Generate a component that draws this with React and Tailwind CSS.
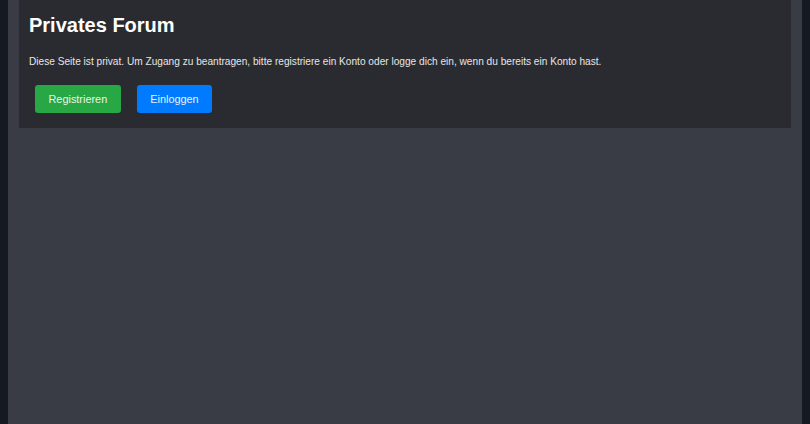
export default function App() {
  return (
    <div className="min-h-[424px] h-[424px] overflow-hidden bg-[#151a22] px-2" style={{ fontFamily: '"Liberation Sans", Arial, sans-serif' }}>
      <div className="h-full bg-[#393c45] px-[11px]">
        <div className="bg-[#2a2b30] pl-[10px] pr-[10px] pt-[11px] pb-[15px]">
          <h1 className="text-[20px] leading-[28px] font-bold text-white">Privates Forum</h1>
          <p className="mt-[15px] text-[10.15px] leading-[16px] text-[#e6e6e6]">
            Diese Seite ist privat. Um Zugang zu beantragen, bitte registriere ein Konto oder logge dich ein, wenn du bereits ein Konto hast.
          </p>
          <div className="mt-[15px] flex gap-4 pl-[6px]">
            <button className="h-[28px] rounded-[3px] bg-[#28a745] px-[13.5px] text-[10.9px] text-[#e8f5ea]">Registrieren</button>
            <button className="h-[28px] rounded-[3px] bg-[#007bff] px-[13.5px] text-[10.9px] text-[#e8f2ff]">Einloggen</button>
          </div>
        </div>
      </div>
    </div>
  );
}
